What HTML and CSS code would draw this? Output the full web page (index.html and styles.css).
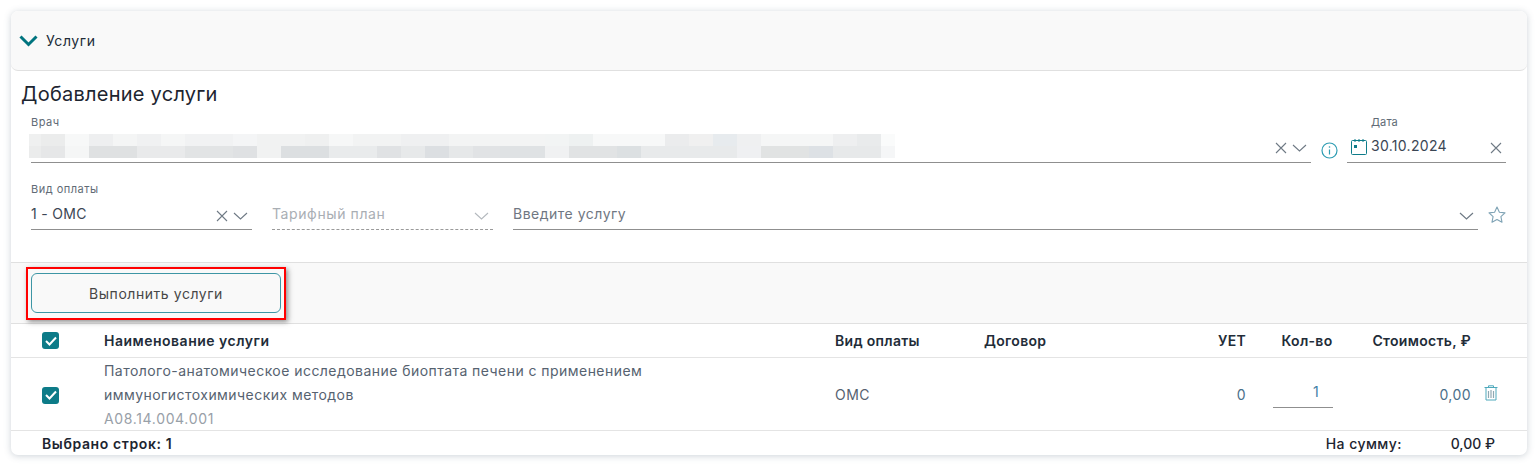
FILE: index.html
```html
<!DOCTYPE html>
<html lang="ru">
<head>
<meta charset="utf-8">
<title>Услуги</title>
<link rel="stylesheet" href="styles.css">
</head>
<body>
<section class="card">
  <header class="card-head">
    <svg class="head-chevron" width="20" height="12" viewBox="0 0 20 12"><path d="M1.5 1.5 L9.5 9.5 L17.5 1.5" fill="none" stroke="#00747f" stroke-width="3"/></svg>
    <span class="head-title">Услуги</span>
  </header>
  <h2 class="form-title">Добавление услуги</h2>
  <div class="form-row row-doctor">
    <div class="field f-doctor">
      <label class="label">Врач</label>
      <div class="control">
        <svg class="blur" width="866" height="24" viewBox="0 0 866 24" shape-rendering="crispEdges">
          <g id="cells">
            <rect x="0" y="0" width="12" height="12" fill="#eff0f0"/><rect x="12" y="0" width="24" height="12" fill="#ebecec"/><rect x="36" y="0" width="24" height="12" fill="#f7f8f8"/><rect x="60" y="0" width="24" height="12" fill="#eeeff0"/><rect x="84" y="0" width="24" height="12" fill="#f4f5f5"/><rect x="108" y="0" width="24" height="12" fill="#f0f1f2"/><rect x="132" y="0" width="24" height="12" fill="#f5f6f6"/><rect x="156" y="0" width="48" height="12" fill="#f1f2f3"/><rect x="204" y="0" width="24" height="12" fill="#f4f5f6"/><rect x="228" y="0" width="48" height="12" fill="#f1f2f2"/><rect x="276" y="0" width="24" height="12" fill="#eff0f0"/><rect x="300" y="0" width="24" height="12" fill="#f6f7f7"/><rect x="324" y="0" width="48" height="12" fill="#f2f3f3"/><rect x="372" y="0" width="48" height="12" fill="#eff0f1"/><rect x="420" y="0" width="96" height="12" fill="#f3f4f4"/><rect x="516" y="0" width="24" height="12" fill="#f2f4f4"/><rect x="540" y="0" width="24" height="12" fill="#eef1f1"/><rect x="564" y="0" width="72" height="12" fill="#f7f8f8"/><rect x="636" y="0" width="24" height="12" fill="#ebeced"/><rect x="660" y="0" width="24" height="12" fill="#f0f0f0"/><rect x="684" y="0" width="24" height="12" fill="#e7ebee"/><rect x="708" y="0" width="24" height="12" fill="#eff0f1"/><rect x="732" y="0" width="72" height="12" fill="#f5f6f6"/><rect x="804" y="0" width="24" height="12" fill="#eeeff0"/><rect x="828" y="0" width="24" height="12" fill="#e9ebec"/><rect x="852" y="0" width="14" height="12" fill="#fafbfb"/>
            <rect x="0" y="12" width="12" height="12" fill="#ebecec"/><rect x="12" y="12" width="24" height="12" fill="#e6e7e8"/><rect x="36" y="12" width="24" height="12" fill="#f5f6f6"/><rect x="60" y="12" width="48" height="12" fill="#dfe1e2"/><rect x="108" y="12" width="48" height="12" fill="#e9eaeb"/><rect x="156" y="12" width="48" height="12" fill="#e2e4e5"/><rect x="204" y="12" width="24" height="12" fill="#dfe1e3"/><rect x="228" y="12" width="24" height="12" fill="#f1f2f2"/><rect x="252" y="12" width="48" height="12" fill="#dcdfe1"/><rect x="300" y="12" width="48" height="12" fill="#e9ebec"/><rect x="348" y="12" width="24" height="12" fill="#e0e2e4"/><rect x="372" y="12" width="24" height="12" fill="#e7e9ea"/><rect x="396" y="12" width="24" height="12" fill="#dcdfe2"/><rect x="420" y="12" width="24" height="12" fill="#e6e8e9"/><rect x="444" y="12" width="27" height="12" fill="#e1e3e5"/><rect x="471" y="12" width="45" height="12" fill="#dfe2e4"/><rect x="516" y="12" width="24" height="12" fill="#f0f1f2"/><rect x="540" y="12" width="48" height="12" fill="#e1e3e4"/><rect x="588" y="12" width="24" height="12" fill="#dce0e2"/><rect x="612" y="12" width="96" height="12" fill="#e8eaeb"/><rect x="708" y="12" width="24" height="12" fill="#eff0f2"/><rect x="732" y="12" width="48" height="12" fill="#e1e3e3"/><rect x="780" y="12" width="24" height="12" fill="#dde1e5"/><rect x="804" y="12" width="48" height="12" fill="#e7e9ea"/><rect x="852" y="12" width="14" height="12" fill="#f5f6f7"/>
          </g>
        </svg>
        <span class="icons">
          <svg class="ic" width="12" height="12" viewBox="0 0 12 12"><path d="M1 1 L11 11 M11 1 L1 11" stroke="#6f7a85" stroke-width="1.1" fill="none"/></svg>
          <svg class="ic" width="15" height="8" viewBox="0 0 15 8"><path d="M1 1 L7.5 7 L14 1" stroke="#6f7a85" stroke-width="1.1" fill="none"/></svg>
        </span>
      </div>
    </div>
    <svg class="info" width="17" height="17" viewBox="0 0 17 17"><circle cx="8.5" cy="8.5" r="7.5" fill="none" stroke="#2f9db3" stroke-width="1.2"/><path d="M8.5 7.5 V12.5" stroke="#2f9db3" stroke-width="1.2"/><circle cx="8.5" cy="5" r="0.8" fill="#2f9db3"/></svg>
    <div class="field f-date">
      <label class="label label-date">Дата</label>
      <div class="control">
        <svg class="cal" width="16" height="16" viewBox="0 0 16 16"><rect x="0.5" y="1.5" width="15" height="14" rx="1" fill="none" stroke="#0e7c8a"/><path d="M4 0 V3 M8 0 V3 M12 0 V3" stroke="#0e7c8a"/><rect x="3" y="6" width="3" height="3" fill="#0e7c8a"/></svg>
        <span class="value date-value">30.10.2024</span>
        <svg class="ic date-x" width="12" height="12" viewBox="0 0 12 12"><path d="M1 1 L11 11 M11 1 L1 11" stroke="#6f7a85" stroke-width="1.1" fill="none"/></svg>
      </div>
    </div>
  </div>
  <div class="form-row row-pay">
    <div class="field f-pay">
      <label class="label">Вид оплаты</label>
      <div class="control">
        <span class="value">1 - ОМС</span>
        <span class="icons">
          <svg class="ic" width="12" height="12" viewBox="0 0 12 12"><path d="M1 1 L11 11 M11 1 L1 11" stroke="#6f7a85" stroke-width="1.1" fill="none"/></svg>
          <svg class="ic" width="15" height="8" viewBox="0 0 15 8"><path d="M1 1 L7.5 7 L14 1" stroke="#6f7a85" stroke-width="1.1" fill="none"/></svg>
        </span>
      </div>
    </div>
    <div class="field f-plan">
      <div class="control dashed">
        <span class="placeholder light">Тарифный план</span>
        <span class="icons">
          <svg class="ic" width="15" height="8" viewBox="0 0 15 8"><path d="M1 1 L7.5 7 L14 1" stroke="#b4b9be" stroke-width="1.1" fill="none"/></svg>
        </span>
      </div>
    </div>
    <div class="field f-service">
      <div class="control">
        <span class="placeholder">Введите услугу</span>
        <span class="icons">
          <svg class="ic" width="15" height="8" viewBox="0 0 15 8"><path d="M1 1 L7.5 7 L14 1" stroke="#6f7a85" stroke-width="1.2" fill="none"/></svg>
        </span>
      </div>
    </div>
    <svg class="star" width="18" height="17" viewBox="0 0 18 17"><path d="M9 1 L11.4 6.2 L17 6.9 L12.9 10.7 L14 16.2 L9 13.5 L4 16.2 L5.1 10.7 L1 6.9 L6.6 6.2 Z" fill="none" stroke="#7fa3b5" stroke-width="1.1" stroke-linejoin="round"/></svg>
  </div>
  <div class="toolbar">
    <div class="highlight"><button class="btn" type="button">Выполнить услуги</button></div>
  </div>
  <div class="grid-row grid-head">
    <span class="c-check"><span class="checkbox"><svg width="12" height="10" viewBox="0 0 12 10"><path d="M1 5 L4.5 8.5 L11 1.5" fill="none" stroke="#fff" stroke-width="2"/></svg></span></span>
    <span class="h-name">Наименование услуги</span>
    <span>Вид оплаты</span>
    <span>Договор</span>
    <span class="right">УЕТ</span>
    <span class="center qty-head">Кол-во</span>
    <span class="right">Стоимость, ₽</span>
    <span></span>
  </div>
  <div class="grid-row grid-item">
    <span class="c-check low"><span class="checkbox"><svg width="12" height="10" viewBox="0 0 12 10"><path d="M1 5 L4.5 8.5 L11 1.5" fill="none" stroke="#fff" stroke-width="2"/></svg></span></span>
    <div class="name">
      <div>Патолого-анатомическое исследование биоптата печени с применением иммуногистохимических методов</div>
      <div class="code">A08.14.004.001</div>
    </div>
    <span>ОМС</span>
    <span></span>
    <span class="right num">0</span>
    <span class="qty"><span class="qty-input">1</span></span>
    <span class="right num">0,00</span>
    <svg class="trash" width="14" height="16" viewBox="0 0 14 16"><path d="M0.5 2.5 H13.5 M4.5 2.5 V0.8 H9.5 V2.5" stroke="#4fa9bc" fill="none"/><path d="M2 2.5 V15 H12 V2.5" stroke="#4fa9bc" fill="none"/><path d="M4.5 6 V13 M7 5 V13 M9.5 6 V13" stroke="#8fa8b2" stroke-width="1.2"/></svg>
  </div>
  <footer class="card-foot">
    <span class="selected">Выбрано строк: 1</span>
    <span class="sum-label">На сумму:</span>
    <span class="sum-value">0,00 ₽</span>
  </footer>
</section>
</body>
</html>
```

FILE: styles.css
```css
* { box-sizing: border-box; }
html, body { margin: 0; height: 100%; background: #fff; overflow: hidden; }
body { padding: 11px 12px 0 11px; font-family: Inter, "Noto Sans", sans-serif; color: #3b4654; font-size: 14px; }

.card {
  width: 1516px;
  height: 444px;
  background: #fff;
  border-radius: 7px;
  box-shadow: 0 1px 7px rgba(90, 110, 125, .3);
  overflow: hidden;
}
.card-head {
  height: 60px;
  display: flex;
  align-items: center;
  gap: 7px;
  padding: 0 0 0 8px;
  background: #f9f9f9;
  border-bottom: 1px solid #e0e0e0;
  border-radius: 7px;
}
.head-chevron { margin-top: 1px; }
.head-title { font-size: 14px; color: #222c38; line-height: 20px; letter-spacing: .6px; }
.form-title { margin: 11px 0 0 10px; font-size: 20px; line-height: 24px; font-weight: 400; color: #1d2530; letter-spacing: .25px; }

.form-row { display: flex; }
.row-doctor { margin: 9px 0 0 20px; height: 48px; }
.row-pay { margin: 18px 0 0 20px; height: 49px; gap: 20px; align-items: flex-end; }

.field { display: flex; flex-direction: column; }
.label { font-size: 11px; line-height: 14px; color: #616b76; display: block; letter-spacing: .5px; }
.control {
  display: flex;
  align-items: center;
  border-bottom: 1px solid #8f8f8f;
  height: 34px;
  position: relative;
}
.f-doctor { width: 1280px; }
.f-doctor .control { justify-content: space-between; }
.blur { margin-left: -2px; margin-top: 5px; align-self: flex-start; }
.icons { display: flex; align-items: center; gap: 5px; margin-left: auto; padding-right: 4px; padding-top: 5px; }
.ic { display: block; }
.info { margin: 27px 0 0 10px; }
.f-date { width: 159px; margin-left: 9px; }
.label-date { padding-left: 24px; letter-spacing: .1px; }
.cal { margin: 2px 4px 0 4px; }
.date-value { margin-top: 1px; letter-spacing: .95px; }
.date-x { margin-left: auto; margin-right: 4px; margin-top: 5px; }
.value { font-size: 14px; line-height: 20px; color: #3b4654; letter-spacing: .3px; }

.f-pay { width: 221px; }
.f-plan { width: 221px; }
.f-plan .control { border-bottom: 1px dashed #9a9a9a; }
.f-service { width: 965px; }
.placeholder { font-size: 14px; line-height: 20px; color: #6f7782; letter-spacing: .5px; }
.placeholder.light { color: #a9aeb4; letter-spacing: .6px; }
.row-pay .value, .row-pay .placeholder { margin-top: 2px; }
.row-pay .icons { padding-top: 6px; }
.star { margin: 0 0 7px -10px; }

.toolbar {
  margin-top: 32px;
  height: 62px;
  background: #f9f9f9;
  border-top: 1px solid #e0e0e0;
  border-bottom: 1px solid #e0e0e0;
  padding: 4px 0 0 15px;
}
.highlight {
  width: 260px;
  height: 53px;
  border: 2px solid #f00;
  padding: 4px 3px;
  box-shadow: 2px 2px 5px rgba(60, 60, 60, .55);
}
.btn {
  width: 250px;
  height: 40px;
  display: block;
  border: 1px solid #3d96a5;
  border-radius: 6px;
  background: #f9f9f9;
  font: 14px Inter, "Noto Sans", sans-serif;
  letter-spacing: .55px;
  color: #474747;
}

.grid-row {
  display: grid;
  grid-template-columns: 93px 731px 149px 196px 66px 112px 113px 56px;
  align-items: center;
  border-bottom: 1px solid #e4e4e4;
}
.grid-head { height: 34px; font-weight: 600; color: #222c38; letter-spacing: .3px; }
.h-name { letter-spacing: .5px; }
.qty-head { padding-left: 10px; }
.grid-item { height: 73px; color: #566270; letter-spacing: .45px; }
.c-check { padding-left: 31px; display: flex; }
.c-check.low { margin-top: 1px; }
.checkbox {
  width: 17px;
  height: 17px;
  border-radius: 3px;
  background: #0d7b88;
  display: flex;
  align-items: center;
  justify-content: center;
}
.right { text-align: right; }
.center { text-align: center; }
.name { line-height: 24px; color: #566270; width: 560px; margin-top: 1px; }
.code { color: #98a0a8; letter-spacing: .65px; }
.num { color: #4b6f8a; }
.qty { display: flex; justify-content: center; padding-left: 2px; }
.qty-input { width: 60px; height: 27px; border-bottom: 1px solid #8f8f8f; text-align: center; color: #3f7fa6; line-height: 20px; padding: 1px 0 0 26px; margin-top: -1px; }
.trash { margin-left: 13px; margin-top: -3px; }

.card-foot {
  height: 24px;
  display: flex;
  align-items: center;
  padding: 0 32px 0 31px;
  font-weight: 500;
  color: #1d2530;
}
.selected { font-weight: 600; letter-spacing: .6px; }
.sum-label { margin-left: auto; letter-spacing: .45px; }
.sum-value { width: 93px; text-align: right; font-weight: 500; }
```
